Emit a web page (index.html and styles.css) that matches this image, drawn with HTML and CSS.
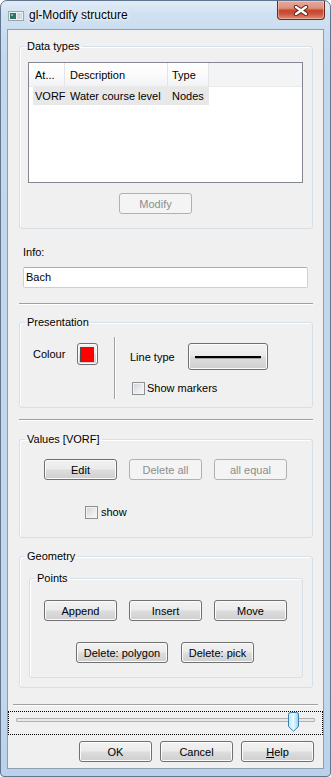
FILE: index.html
```html
<!DOCTYPE html>
<html>
<head>
<meta charset="utf-8">
<title>gl-Modify structure</title>
<link rel="stylesheet" href="styles.css">
</head>
<body>
<div class="window">
  <div class="titlebar">
    <svg class="app-icon" width="16" height="10" viewBox="0 0 16 10">
      <rect x="0.5" y="0.5" width="15" height="9" fill="#eef1f2" stroke="#9aa6ad"/>
      <rect x="2" y="2" width="6" height="6" fill="#2e7566"/>
      <rect x="3" y="3" width="2" height="2" fill="#7fb8a8"/>
      <rect x="9" y="2" width="5" height="6" fill="#d3d9dc"/>
    </svg>
    <span class="title">gl-Modify structure</span>
    <div class="close">
      <svg width="16" height="11" viewBox="0 0 16 11">
        <path d="M3 2 L13 9 M13 2 L3 9" stroke="#5a2118" stroke-width="4.2" stroke-linecap="round"/>
        <path d="M3 2 L13 9 M13 2 L3 9" stroke="#ffffff" stroke-width="2.4" stroke-linecap="round"/>
      </svg>
    </div>
  </div>

  <div class="client">
    <fieldset class="group g-data">
      <legend>Data types</legend>
      <div class="gb-body data-body">
        <div class="listview">
          <div class="lv-head">
            <div class="hc c1">At...</div>
            <div class="hc c2">Description</div>
            <div class="hc c3">Type</div>
            <div class="hc c4"></div>
          </div>
          <div class="lv-row">
            <div class="rc r1">VORF</div>
            <div class="rc r2">Water course level</div>
            <div class="rc r3">Nodes</div>
          </div>
        </div>
        <button class="btn disabled modify">Modify</button>
      </div>
    </fieldset>

    <div class="info">
      <div class="info-label">Info:</div>
      <div class="textbox">Bach</div>
    </div>

    <div class="sep sep1"></div>

    <fieldset class="group g-pres">
      <legend>Presentation</legend>
      <div class="gb-body pres-body">
        <div class="colour-label">Colour</div>
        <button class="colour-btn"><span class="swatch"></span></button>
        <div class="vline"></div>
        <div class="pres-right">
          <div class="lt-row">
            <span class="lt-label">Line type</span>
            <button class="btn lt-btn"><span class="lt-line"></span></button>
          </div>
          <div class="cb-row markers">
            <span class="cb"></span><span>Show markers</span>
          </div>
        </div>
      </div>
    </fieldset>

    <div class="sep sep2"></div>

    <fieldset class="group g-values">
      <legend>Values [VORF]</legend>
      <div class="gb-body values-body">
        <div class="btn-row">
          <button class="btn">Edit</button>
          <button class="btn disabled">Delete all</button>
          <button class="btn disabled">all equal</button>
        </div>
        <div class="cb-row show-row">
          <span class="cb"></span><span>show</span>
        </div>
      </div>
    </fieldset>

    <fieldset class="group g-geom">
      <legend>Geometry</legend>
      <div class="gb-body geom-body">
        <fieldset class="group g-points">
          <legend>Points</legend>
          <div class="gb-body points-body">
            <div class="btn-row">
              <button class="btn">Append</button>
              <button class="btn">Insert</button>
              <button class="btn">Move</button>
            </div>
            <div class="btn-row del-row">
              <button class="btn wide">Delete: polygon</button>
              <button class="btn">Delete: pick</button>
            </div>
          </div>
        </fieldset>
      </div>
    </fieldset>

    <div class="sep sep3"></div>

    <div class="slider">
      <div class="track"></div>
      <svg class="thumb" width="11" height="20" viewBox="0 0 11 20">
        <defs>
          <linearGradient id="tg" x1="0" y1="0" x2="1" y2="0">
            <stop offset="0" stop-color="#bfe8fa"/>
            <stop offset="0.5" stop-color="#e9f8ff"/>
            <stop offset="1" stop-color="#8fd0ee"/>
          </linearGradient>
        </defs>
        <path d="M0.5 2.5 Q0.5 0.5 2.5 0.5 H8.5 Q10.5 0.5 10.5 2.5 V14.5 L5.5 19.3 L0.5 14.5 Z" fill="url(#tg)" stroke="#3c7fb1"/>
      </svg>
    </div>

    <div class="dlg-buttons">
      <button class="btn">OK</button>
      <button class="btn">Cancel</button>
      <button class="btn"><u>H</u>elp</button>
    </div>
  </div>
</div>
</body>
</html>
```

FILE: styles.css
```css
* { box-sizing: border-box; }

html, body {
  margin: 0;
  padding: 0;
  background: #ffffff;
}

body {
  font-family: "Liberation Sans", Arial, sans-serif;
  font-size: 11px;
  color: #000;
}

.window {
  width: 331px;
  height: 777px;
  border: 1px solid #5f7590;
  border-radius: 7px 7px 4px 4px;
  background: linear-gradient(180deg, #e1ecf7 0px, #cfe0f1 14px, #c4d8ed 60px, #c2d7ec 700px, #bad1e9 777px);
  display: flex;
  flex-direction: column;
  overflow: hidden;
}

.titlebar {
  flex: none;
  height: 28px;
  display: flex;
  align-items: center;
  padding-left: 7px;
}

.app-icon { flex: none; margin-top: 1px; }

.title {
  margin-left: 5px;
  font-size: 12px;
  color: #000;
  text-shadow: 0 0 6px #ffffff, 0 0 3px #ffffff;
}

.close {
  align-self: flex-start;
  margin-left: auto;
  margin-right: 5px;
  width: 48px;
  height: 19px;
  border: 1px solid #6a2a20;
  border-top: none;
  border-radius: 0 0 4px 4px;
  background: linear-gradient(180deg, #e8aa9c 0%, #dc8f7d 40%, #c6482f 52%, #c9523a 70%, #e08d74 100%);
  box-shadow: inset 0 0 0 1px rgba(255, 220, 210, 0.45);
  display: flex;
  align-items: center;
  justify-content: center;
}

.client {
  flex: none;
  margin: 0 6px 7px 6px;
  height: 740px;
  border: 1px solid #8a9eb4;
  background: #f0f0f0;
  padding: 0 10px 0 11px;
}

/* Group boxes */
.group {
  margin: 0;
  padding: 0;
  min-width: 0;
  border: 1px solid #d5dfe5;
  border-radius: 3px;
  box-shadow: inset 1px 1px 0 #ffffff;
}

.group > legend {
  padding: 0 2px;
  margin-left: 5px;
  font-size: 11px;
  line-height: 14px;
}

/* Buttons */
.btn {
  flex: none;
  width: 73px;
  height: 21px;
  padding: 0;
  margin: 0;
  border: 1px solid #707070;
  border-radius: 3px;
  background: linear-gradient(180deg, #f2f2f2 0%, #ebebeb 48%, #dddddd 52%, #cfcfcf 100%);
  box-shadow: inset 0 0 0 1px #fbfbfb;
  font-family: "Liberation Sans", Arial, sans-serif;
  font-size: 11px;
  color: #000;
  display: flex;
  align-items: center;
  justify-content: center;
}

.btn.disabled {
  border-color: #adb2b5;
  background: #f4f4f4;
  box-shadow: none;
  color: #8d8d8d;
}

.btn.wide { width: 92px; }

/* Data types */
.g-data { margin-top: 9px; }
.data-body { padding: 9px 9px 14px 8px; }

.listview {
  height: 121px;
  border: 1px solid #828790;
  background: #ffffff;
}

.lv-head {
  display: flex;
  height: 24px;
  background: linear-gradient(180deg, #ffffff 0%, #fbfbfc 50%, #f1f2f4 100%);
  border-bottom: 1px solid #eaeaea;
}

.hc {
  padding-top: 2px;
  line-height: 21px;
  border-right: 1px solid #e2e4e8;
  white-space: nowrap;
  overflow: hidden;
}

.hc.c1 { width: 36px; padding-left: 6px; }
.hc.c2 { width: 103px; padding-left: 5px; }
.hc.c3 { width: 41px; padding-left: 4px; }
.hc.c4 { flex: 1; border-right: none; background: #f3f4f5; }

.lv-row {
  display: flex;
  width: 176px;
  height: 18px;
  margin-left: 4px;
  background: #e8e8e8;
}

.rc {
  padding-top: 1px;
  line-height: 17px;
  white-space: nowrap;
}
.rc.r1 { width: 32px; padding-left: 2px; }
.rc.r2 { width: 103px; padding-left: 5px; }
.rc.r3 { width: 41px; padding-left: 4px; }

.modify {
  margin-top: 10px;
  margin-left: 91px;
}

/* Info */
.info { padding-left: 4px; }

.info-label {
  margin-top: 16px;
  line-height: 14px;
}

.textbox {
  margin-top: 8px;
  width: 285px;
  height: 21px;
  border: 1px solid #cdd0d5;
  border-top-color: #abadb3;
  border-radius: 2px;
  background: #ffffff;
  padding-left: 2px;
  line-height: 19px;
}

/* Separators */
.sep {
  height: 2px;
  border-top: 1px solid #a0a0a0;
  border-bottom: 1px solid #ffffff;
}

.sep1 { margin-top: 15px; }
.sep2 { margin-top: 11px; }
.sep3 { margin: 16px -5px 0 -6px; }

/* Presentation */
.g-pres { margin-top: 10px; }

.pres-body {
  display: flex;
  align-items: flex-start;
  height: 78px;
  padding: 8px 0 8px 0;
}

.colour-label {
  width: 44px;
  margin-left: 13px;
  margin-top: 10px;
  line-height: 14px;
}

.colour-btn {
  flex: none;
  width: 21px;
  height: 22px;
  margin: 6px 0 0 0;
  padding: 3px 0 0 2px;
  border: 1px solid #707070;
  border-radius: 3px;
  background: linear-gradient(180deg, #f2f2f2 0%, #ebebeb 48%, #dddddd 52%, #cfcfcf 100%);
  box-shadow: inset 0 0 0 1px #fbfbfb;
  display: flex;
  align-items: flex-start;
}

.swatch {
  display: block;
  width: 14px;
  height: 15px;
  background: #ff0000;
  border: 1px solid #4a4a4a;
}

.vline {
  flex: none;
  width: 2px;
  height: 62px;
  margin-left: 16px;
  border-left: 1px solid #a0a0a0;
  border-right: 1px solid #ffffff;
}

.pres-right {
  margin-left: 14px;
}

.lt-row {
  display: flex;
  align-items: center;
  margin-top: 6px;
  height: 27px;
}

.lt-label {
  width: 58px;
  padding-top: 1px;
}

.lt-btn {
  width: 80px;
  height: 27px;
}

.lt-line {
  display: block;
  width: 66px;
  height: 2px;
  background: #000000;
  box-shadow: 0 1px 0 rgba(0, 0, 0, 0.25);
}

.cb-row {
  display: flex;
  align-items: center;
  height: 13px;
  line-height: 13px;
}

.cb {
  flex: none;
  width: 13px;
  height: 13px;
  margin-right: 2px;
  border: 1px solid #8e8f8f;
  background: linear-gradient(135deg, #cdd1d6 0%, #e9ebee 55%, #f8f8f8 100%);
  box-shadow: inset 0 0 0 1px #f4f4f4;
}

.markers {
  margin-top: 12px;
  margin-left: 2px;
}

/* Values */
.g-values { margin-top: 11px; }
.values-body { padding: 13px 0 18px 24px; }

.btn-row {
  display: flex;
  gap: 12px;
}

.show-row {
  margin-top: 26px;
  margin-left: 41px;
}

.show-row .cb { margin-right: 3px; }

/* Geometry */
.g-geom { margin-top: 11px; }
.geom-body { padding: 8px 9px 9px 9px; }

.points-body { padding: 15px 0 14px 14px; }

.del-row {
  margin-top: 21px;
  margin-left: 32px;
  gap: 13px;
}

/* Slider */
.slider {
  position: relative;
  margin: 5px -10px 0 -11px;
  height: 24px;
  border: 1px dotted #000000;
}

.track {
  margin: 6px 7px 0 7px;
  height: 4px;
  border: 1px solid #b0b0b0;
  border-radius: 1px;
  background: #e7e9ea;
}

.thumb {
  position: absolute;
  left: 279px;
  top: 0;
}

/* Dialog buttons */
.dlg-buttons {
  display: flex;
  justify-content: flex-end;
  gap: 8px;
  margin-top: 6px;
  margin-right: -1px;
}
```
